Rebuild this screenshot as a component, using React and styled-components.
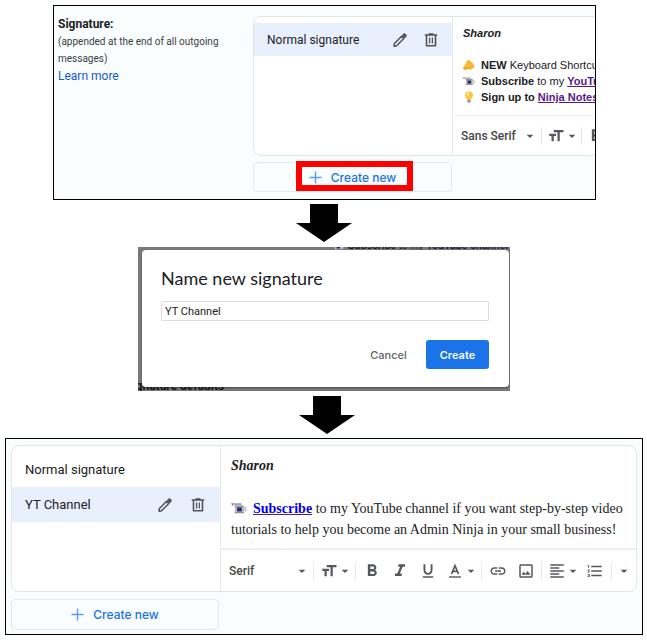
import React from "react";
import styled, { createGlobalStyle } from "styled-components";
import {
  MdArrowDropDown,
  MdFormatSize,
  MdFormatBold,
  MdFormatItalic,
  MdFormatUnderlined,
  MdLink,
  MdOutlineImage,
  MdFormatAlignLeft,
  MdFormatListNumbered,
} from "react-icons/md";

const GlobalStyle = createGlobalStyle`
  * { box-sizing: border-box; }
  body {
    margin: 0;
    background: #fff;
    color: #202124;
    font-family: Roboto, "Liberation Sans", sans-serif;
    font-size: 13px;
  }
  button, select, input { font: inherit; color: inherit; margin: 0; }
`;

const Page = styled.main`
  display: flex;
  flex-direction: column;
  padding: 5px 4px 6px 5px;
`;

const Panel = styled.section`
  border: 1px solid #000;
  background: #f9fdfe;
  overflow: hidden;
`;

const SettingsPanel = styled(Panel)`
  display: grid;
  grid-template-columns: 199px minmax(0, 1fr);
  margin: 0 47px 0 48px;
  padding: 10px 0 7px;
`;

const EditorPanel = styled(Panel)`
  padding: 6px 5px 4px;
`;

const Intro = styled.div`
  padding-left: 4px;
  line-height: 17px;
`;

const IntroTitle = styled.h2`
  margin: 0;
  font-size: 12px;
  line-height: 17px;
  font-weight: 700;
`;

const IntroNote = styled.p`
  margin: 0;
  max-width: 176px;
  font-size: 10px;
  line-height: 17px;
  color: #3c4043;
`;

const HelpLink = styled.a`
  font-size: 12px;
  color: #1558d6;
  text-decoration: none;
`;

const Bleed = styled.div`
  min-width: 0;
  overflow: hidden;
`;

const SignatureBox = styled.div`
  display: grid;
  grid-template-columns: ${(p) => p.$list}px minmax(0, 1fr);
  min-height: ${(p) => p.$height}px;
  width: ${(p) => (p.$wide ? "calc(100% + 240px)" : "100%")};
  border: 1px solid #e3e6e8;
  border-radius: 8px;
  background: #fff;
  overflow: hidden;
`;

const List = styled.ul`
  margin: 0;
  padding: 6px 0 0;
  list-style: none;
  border-right: 1px solid #e8eaed;
`;

const ListItem = styled.li`
  display: flex;
  align-items: center;
  gap: ${(p) => (p.$compact ? 13 : 15)}px;
  height: ${(p) => (p.$compact ? 33 : 35)}px;
  padding: 0 ${(p) => (p.$compact ? 12 : 13)}px 0 13px;
  font-size: ${(p) => (p.$compact ? 12 : 13)}px;
  background: ${(p) => (p.$selected ? "#e8f0fe" : "transparent")};
`;

const ItemName = styled.span`
  flex: 1;
`;

const IconButton = styled.button`
  display: grid;
  place-items: center;
  width: 18px;
  height: 18px;
  padding: 0;
  border: 0;
  background: none;
  color: #505357;
`;

const Editor = styled.div`
  display: flex;
  flex-direction: column;
  min-width: 0;
`;

const SansBody = styled.div`
  flex: 1;
  padding: 8px 10px 0;
  font-family: "Liberation Sans", Arial, sans-serif;
  font-size: 11px;
  line-height: 16px;
`;

const SerifBody = styled.div`
  flex: 1;
  padding: 9px 10px 0;
  font-family: "Liberation Serif", "Times New Roman", serif;
  font-size: 14px;
  line-height: 21px;
`;

const Sender = styled.p`
  margin: 0 0 ${(p) => p.$gap}px;
  font-weight: 700;
  font-style: italic;
`;

const SignatureLine = styled.p`
  margin: 0;

  svg { margin-right: 6px; vertical-align: -3px; }
`;

const SansLine = styled(SignatureLine)`
  display: flex;
  align-items: center;
  white-space: pre;

  svg { flex: none; }
`;

const VisitedLink = styled.a`
  font-weight: 700;
  color: #551a8b;
`;

const SubscribeLink = styled.a`
  font-weight: 700;
  color: #0000ee;
  text-decoration-color: #551a8b;
`;

const Toolbar = styled.div`
  display: flex;
  align-items: center;
  height: ${(p) => (p.$compact ? 40 : 43)}px;
  flex: none;
  padding-left: 8px;
  border-top: ${(p) => (p.$compact ? 1 : 2)}px solid #eceef0;
  color: #55585c;
`;

const FontField = styled.label`
  display: grid;
  align-items: center;
  width: ${(p) => (p.$compact ? 80 : 84)}px;
  flex: none;

  & > * { grid-area: 1 / 1; }
  svg { justify-self: end; margin-right: 3px; pointer-events: none; }
`;

const FontSelect = styled.select`
  appearance: none;
  width: 100%;
  padding: 0;
  border: 0;
  background: none;
  font-size: 12px;
  font-weight: 500;
  color: #444746;
`;

const ToolGroup = styled.div`
  display: flex;
  align-items: center;
  height: 18px;
  flex: none;
  padding: 0 ${(p) => p.$end || 0}px 0 ${(p) => p.$start || 0}px;
  border-left: 1px solid #e8eaed;
`;

const Tool = styled.button`
  display: flex;
  align-items: center;
  justify-content: center;
  width: ${(p) => p.$width || 28}px;
  height: 28px;
  padding: 0 0 0 ${(p) => p.$inset || 0}px;
  border: 0;
  background: none;
  color: inherit;

  svg { flex: none; }
  svg + svg { margin-left: -1px; }
`;

const CreateRow = styled.div`
  position: relative;
  width: ${(p) => p.$width}px;
  margin-top: ${(p) => p.$gap}px;
`;

const CreateButton = styled.button`
  display: flex;
  align-items: center;
  justify-content: center;
  gap: 9px;
  width: 100%;
  height: ${(p) => p.$height}px;
  padding: 0;
  border: 1px solid #e6e9eb;
  border-radius: 4px;
  background: transparent;
  color: #1a73e8;
  font-family: Inter, Lato, sans-serif;
  font-size: 12px;
  font-weight: 500;
`;

const Highlight = styled.span`
  position: absolute;
  inset: -1px 39px 1px 43px;
  border: 6px solid #ff0000;
  pointer-events: none;
`;

const Step = styled.svg`
  display: block;
  align-self: center;
  width: 56px;
  height: 38px;
  margin: ${(p) => p.$margin};
`;

const Backdrop = styled.div`
  position: relative;
  margin: 0 133px;
  padding: 3px 1px 4px 4px;
  background: #77797a;
  overflow: hidden;
`;

const Behind = styled.span`
  position: absolute;
  ${(p) => (p.$top ? "top: -8px; right: 2px;" : "top: 132px; left: -13px;")}
  display: flex;
  align-items: center;
  gap: 4px;
  font-family: ${(p) => (p.$top ? '"Liberation Sans", Arial' : "Roboto")}, sans-serif;
  font-size: ${(p) => (p.$top ? 10 : 12)}px;
  line-height: 14px;
  font-weight: ${(p) => (p.$top ? 400 : 700)};
  white-space: pre;
  color: #17181a;

  em { font-style: normal; font-weight: 700; color: #281040; }
`;

const Dialog = styled.form`
  position: relative;
  padding: 17px 20px 18px 19px;
  border-radius: 4px;
  background: #fff;
  box-shadow: 0 1px 2px rgba(0, 0, 0, 0.4);
`;

const DialogTitle = styled.label`
  display: block;
  margin-bottom: 11px;
  font-family: Lato, Inter, sans-serif;
  font-size: 18px;
  line-height: 23px;
`;

const NameInput = styled.input`
  display: block;
  width: 100%;
  height: 20px;
  padding: 0 3px;
  border: 1px solid #dcdee0;
  border-radius: 1px;
  font-size: 11px;
  background: #fff;
`;

const Actions = styled.div`
  display: flex;
  justify-content: flex-end;
  gap: 6px;
  margin-top: 19px;
`;

const Action = styled.button`
  height: 29px;
  min-width: 63px;
  padding: 0 8px;
  border: 0;
  border-radius: 3px;
  font-family: Inter, Lato, sans-serif;
  font-size: 11px;
  font-weight: ${(p) => (p.$primary ? 600 : 500)};
  background: ${(p) => (p.$primary ? "#1a73e8" : "transparent")};
  color: ${(p) => (p.$primary ? "#fff" : "#5f6368")};
`;

const PencilIcon = () => (
  <svg width="18" height="18" viewBox="0 0 18 18" fill="none" aria-hidden="true">
    <path d="M3.4 12.5 10.6 5.3 12.8 7.5 5.6 14.7 3 15.2Z" stroke="currentColor" strokeWidth="1.5" strokeLinejoin="round" />
    <path d="m11.2 4.4 1.3-1.3q.9-.9 1.8 0l.7.7q.9.9 0 1.8l-1.3 1.3Z" fill="currentColor" stroke="currentColor" />
  </svg>
);

const TrashIcon = () => (
  <svg width="18" height="18" viewBox="0 0 18 18" fill="none" stroke="currentColor" aria-hidden="true">
    <path d="M2.8 4h12.400M6.500 3h5" strokeWidth="1.6" />
    <path d="M4.500 4v10.800h9V4" strokeWidth="1.6" strokeLinejoin="round" />
    <path d="M7.600 6.500v6M10.400 6.500v6" strokeWidth="1.3" />
  </svg>
);

const PlusIcon = () => (
  <svg width="13" height="13" viewBox="0 0 13 13" stroke="#5b9bf0" strokeWidth="1.4" aria-hidden="true">
    <path d="M6.5 0.5v12M0.5 6.5h12" />
  </svg>
);

const TextColorIcon = () => (
  <svg width="18" height="18" viewBox="0 0 18 18" fill="none" stroke="currentColor" aria-hidden="true">
    <path d="M5.5 12 9 3.6 12.5 12M6.8 9.3h4.4" strokeWidth="1.7" />
    <path d="M3 15h12" strokeWidth="1.4" />
  </svg>
);

const Caret = () => <MdArrowDropDown size={16} aria-hidden="true" />;

const BellIcon = () => (
  <svg width="12" height="12" viewBox="0 0 12 12" aria-hidden="true">
    <path d="M4 1.600q1.200-1.300 2.500-.200 4.300 2.300 4.500 5.300.500 1.800-.700 2.300L1.800 10.700.3 9.700.3 8Q3 5.500 4 1.600Z" fill="#fbb833" />
    <path d="M.6 8.600 10.600 7.600l.4 1.200-9.200 1.900L.3 9.700Z" fill="#f6a423" />
    <circle cx="7.500" cy="10" r="1.300" fill="#f7c558" />
  </svg>
);

const CameraIcon = ({ size = 12 }) => (
  <svg width={size} height={size} viewBox="0 0 14 14" aria-hidden="true">
    <path d="M0.300 2.300 1.800 2.800V5L.8 4.800Z" fill="#9a6470" />
    <path d="M2.200 2.800h7v1.700h-7Z" fill="#9aa0a8" />
    <path d="M3.300 5h8v6.300h-8Z" fill="#b9bdc6" />
    <path d="M3.300 5h8v1h-8ZM3.300 10.700h8v1h-8Z" fill="#7d828c" />
    <rect x="5.300" y="6.500" width="4.200" height="3.500" fill="#2c2c63" />
    <path d="M11.300 6.500 13.500 5.500v5l-2.200-1Z" fill="#c5c8ce" />
  </svg>
);

const BulbIcon = () => (
  <svg width="12" height="12" viewBox="0 0 12 12" aria-hidden="true">
    <path d="M6 .5a4 4 0 0 1 4 4c0 1.800-1.700 2.500-2 4.300H4C3.700 7 2 6.300 2 4.500a4 4 0 0 1 4-4Z" fill="#fcc63d" />
    <ellipse cx="4.900" cy="3.300" rx="1.300" ry="1.700" fill="#ffe89a" />
    <path d="M4.300 8.800h3.400v1.600L6.800 11.700H5.200l-.9-1.300Z" fill="#9299a3" />
  </svg>
);

const DownArrow = ({ margin }) => (
  <Step viewBox="0 0 56 38" $margin={margin} aria-hidden="true">
    <path d="M14 0h28v19h14L28 38 0 19h14Z" />
  </Step>
);

const Item = ({ name, compact, selected }) => (
  <ListItem $compact={compact} $selected={selected}>
    <ItemName>{name}</ItemName>
    {selected && (
      <>
        <IconButton type="button" aria-label={`Edit ${name}`}><PencilIcon /></IconButton>
        <IconButton type="button" aria-label={`Delete ${name}`}><TrashIcon /></IconButton>
      </>
    )}
  </ListItem>
);

const FormatBar = ({ font, compact }) => (
  <Toolbar $compact={compact}>
    <FontField $compact={compact}>
      <FontSelect aria-label="Font" defaultValue={font}>
        <option>Sans Serif</option>
        <option>Serif</option>
      </FontSelect>
      <Caret />
    </FontField>
    <ToolGroup>
      <Tool $width={compact ? 39 : 41} $inset={4} type="button" aria-label="Size"><MdFormatSize size={18} /><Caret /></Tool>
    </ToolGroup>
    <ToolGroup $start={compact ? 0 : 2}>
      <Tool type="button" aria-label="Bold"><MdFormatBold size={20} /></Tool>
      <Tool type="button" aria-label="Italic"><MdFormatItalic size={20} /></Tool>
      <Tool type="button" aria-label="Underline"><MdFormatUnderlined size={18} /></Tool>
      <Tool $width={39} $inset={1} type="button" aria-label="Text color"><TextColorIcon /><Caret /></Tool>
    </ToolGroup>
    <ToolGroup $start={2} $end={1}>
      <Tool type="button" aria-label="Link"><MdLink size={18} /></Tool>
      <Tool type="button" aria-label="Insert image"><MdOutlineImage size={18} /></Tool>
    </ToolGroup>
    <ToolGroup $end={2}>
      <Tool $width={39} $inset={5} type="button" aria-label="Align"><MdFormatAlignLeft size={18} /><Caret /></Tool>
      <Tool type="button" aria-label="Numbered list"><MdFormatListNumbered size={18} /></Tool>
    </ToolGroup>
    <ToolGroup>
      <Tool $width={24} type="button" aria-label="More formatting"><Caret /></Tool>
    </ToolGroup>
  </Toolbar>
);

export default function App() {
  return (
    <>
      <GlobalStyle />
      <Page>
        <SettingsPanel>
          <Intro>
            <IntroTitle>Signature:</IntroTitle>
            <IntroNote>(appended at the end of all outgoing messages)</IntroNote>
            <HelpLink href="#learn-more">Learn more</HelpLink>
          </Intro>
          <Bleed>
            <SignatureBox $list={199} $height={140} $wide>
              <List>
                <Item name="Normal signature" compact selected />
              </List>
              <Editor>
                <SansBody>
                  <Sender $gap={16}>Sharon</Sender>
                  <SansLine><BellIcon /><b>NEW</b> Keyboard Shortcuts</SansLine>
                  <SansLine><CameraIcon /><b>Subscribe</b> to my <VisitedLink href="#youtube">YouTube channel</VisitedLink></SansLine>
                  <SansLine><BulbIcon /><b>Sign up to </b><VisitedLink href="#notes">Ninja Notes</VisitedLink></SansLine>
                </SansBody>
                <FormatBar font="Sans Serif" compact />
              </Editor>
            </SignatureBox>
            <CreateRow $width={199} $gap={6}>
              <CreateButton type="button" $height={30}><PlusIcon />Create new</CreateButton>
              <Highlight />
            </CreateRow>
          </Bleed>
        </SettingsPanel>

        <DownArrow margin="4px 0 5px" />

        <Backdrop>
          <Behind $top aria-hidden="true"><CameraIcon /><span><b>Subscribe</b> to my <em>YouTube channel</em></span></Behind>
          <Behind aria-hidden="true">Signature defaults</Behind>
          <Dialog onSubmit={(e) => e.preventDefault()}>
            <DialogTitle htmlFor="signature-name">Name new signature</DialogTitle>
            <NameInput id="signature-name" type="text" defaultValue="YT Channel" />
            <Actions>
              <Action type="button">Cancel</Action>
              <Action type="submit" $primary>Create</Action>
            </Actions>
          </Dialog>
        </Backdrop>

        <DownArrow margin="5px 0 4px 6px" />

        <EditorPanel>
          <SignatureBox $list={209} $height={147}>
            <List>
              <Item name="Normal signature" />
              <Item name="YT Channel" selected />
            </List>
            <Editor>
              <SerifBody>
                <Sender $gap={22}>Sharon</Sender>
                <SignatureLine>
                  <CameraIcon size={16} />
                  <SubscribeLink href="#subscribe">Subscribe</SubscribeLink> to my YouTube channel if you want step-by-step video tutorials to help you become an Admin Ninja in your small business!
                </SignatureLine>
              </SerifBody>
              <FormatBar font="Serif" />
            </Editor>
          </SignatureBox>
          <CreateRow $width={208} $gap={7}>
            <CreateButton type="button" $height={31}><PlusIcon />Create new</CreateButton>
          </CreateRow>
        </EditorPanel>
      </Page>
    </>
  );
}
